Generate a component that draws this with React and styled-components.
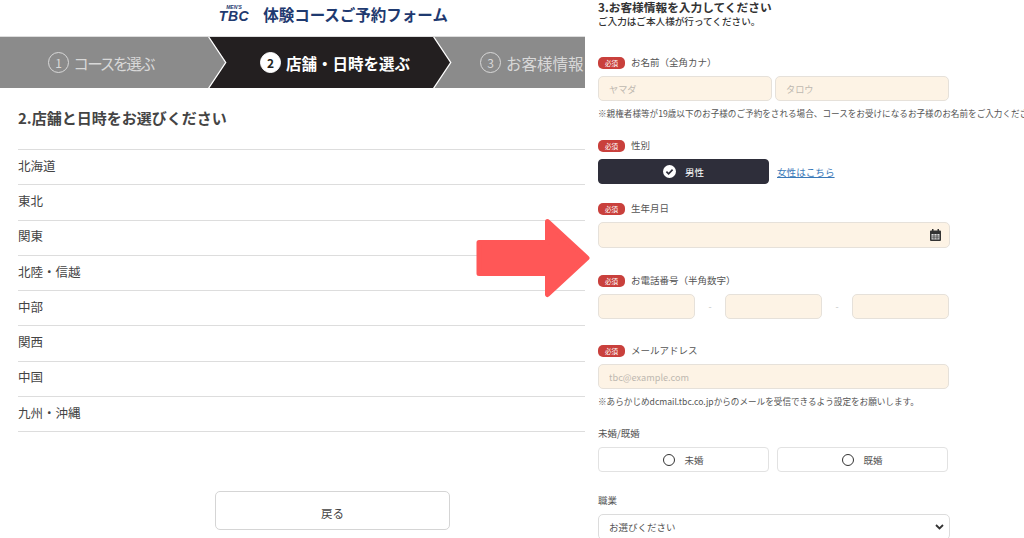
import styled, { createGlobalStyle } from 'styled-components';

const GlobalStyle = createGlobalStyle`
  html, body {
    margin: 0;
    padding: 0;
    background: #fff;
    overflow: hidden;
  }
  * {
    box-sizing: border-box;
  }
  body {
    font-family: "Noto Sans CJK JP", "Liberation Sans", sans-serif;
    color: #333;
  }
`;

const AREAS = ['北海道', '東北', '関東', '北陸・信越', '中部', '関西', '中国', '九州・沖縄'];

function FieldLabel({ required, children }) {
  return (
    <Label>
      {required && <Badge>必須</Badge>}
      <span>{children}</span>
    </Label>
  );
}

function CheckIcon() {
  return (
    <svg width="13" height="13" viewBox="0 0 13 13">
      <circle cx="6.5" cy="6.5" r="6.5" fill="#fff" />
      <path d="M3.4 6.7l2.2 2.2 4-4.2" fill="none" stroke="#2e2e3a" strokeWidth="1.7" />
    </svg>
  );
}

function CalendarIcon() {
  return (
    <svg width="11" height="12" viewBox="0 0 11 12">
      <path d="M2 0h1.5v1.5h4V0H9v1.5h1a1 1 0 0 1 1 1V11a1 1 0 0 1-1 1H1a1 1 0 0 1-1-1V2.5a1 1 0 0 1 1-1h1z" fill="#333" />
      <path d="M1.5 5h8v5.5h-8z" fill="#ddd" />
      <path d="M1.5 7h8M1.5 8.8h8M4 5v5.5M7 5v5.5" stroke="#333" strokeWidth=".7" />
    </svg>
  );
}

export default function App() {
  return (
    <Page>
      <GlobalStyle />
      <LeftPanel>
        <Header>
          <Logo>
            <LogoSmall>MEN'S</LogoSmall>
            <LogoMain>TBC</LogoMain>
          </Logo>
          <HeaderTitle>体験コースご予約フォーム</HeaderTitle>
        </Header>
        <Stepper>
          <Step $first>
            <StepNumber>1</StepNumber>
            <StepText $tight>コースを選ぶ</StepText>
          </Step>
          <Step $active>
            <StepNumber $active>2</StepNumber>
            <StepText>店舗・日時を選ぶ</StepText>
          </Step>
          <Step $last>
            <StepNumber>3</StepNumber>
            <StepText>お客様情報</StepText>
          </Step>
        </Stepper>
        <SectionTitle>2.店舗と日時をお選びください</SectionTitle>
        <AreaList>
          {AREAS.map(area => (
            <AreaItem key={area}>{area}</AreaItem>
          ))}
        </AreaList>
        <BackButton>戻る</BackButton>
      </LeftPanel>

      <RightPanel>
        <FormTitle>3.お客様情報を入力してください</FormTitle>
        <FormLead>ご入力はご本人様が行ってください。</FormLead>

        <Field $top={27}>
          <FieldLabel required>お名前（全角カナ）</FieldLabel>
          <Row $gap={3}>
            <TextInput $width={174} placeholder="ヤマダ" />
            <TextInput $width={174} placeholder="タロウ" />
          </Row>
          <Note>※親権者様等が19歳以下のお子様のご予約をされる場合、コースをお受けになるお子様のお名前をご入力ください。</Note>
        </Field>

        <Field $top={19}>
          <FieldLabel required>性別</FieldLabel>
          <Row $gap={8}>
            <ChoiceButton $selected><CheckIcon />男性</ChoiceButton>
            <TextLink href="#">女性はこちら</TextLink>
          </Row>
        </Field>

        <Field $top={17}>
          <FieldLabel required>生年月日</FieldLabel>
          <DateBox>
            <CalendarIcon />
          </DateBox>
        </Field>

        <Field $top={25}>
          <FieldLabel required>お電話番号（半角数字）</FieldLabel>
          <Row $gap={0}>
            <TextInput $width={97} />
            <Dash>-</Dash>
            <TextInput $width={97} />
            <Dash>-</Dash>
            <TextInput $width={97} />
          </Row>
        </Field>

        <Field $top={24}>
          <FieldLabel required>メールアドレス</FieldLabel>
          <TextInput $width={351} placeholder="tbc@example.com" />
          <Note>※あらかじめdcmail.tbc.co.jpからのメールを受信できるよう設定をお願いします。</Note>
        </Field>

        <Field $top={19}>
          <FieldLabel>未婚/既婚</FieldLabel>
          <Row $gap={8}>
            <ChoiceButton><RadioMark />未婚</ChoiceButton>
            <ChoiceButton><RadioMark />既婚</ChoiceButton>
          </Row>
        </Field>

        <Field $top={21}>
          <FieldLabel>職業</FieldLabel>
          <SelectBox>
            お選びください
            <svg width="9" height="6" viewBox="0 0 9 6">
              <path d="M1 1l3.5 3.5L8 1" fill="none" stroke="#333" strokeWidth="1.8" />
            </svg>
          </SelectBox>
        </Field>
      </RightPanel>

      <Arrow width="116" height="80" viewBox="0 0 116 80">
        <path
          d="M3 24.5h68.5V3.5L111 40 71.5 76.5V55.5H3z"
          fill="#ff5757"
          stroke="#ff5757"
          strokeWidth="5"
          strokeLinejoin="round"
        />
      </Arrow>
    </Page>
  );
}

const Page = styled.div`
  position: relative;
  display: flex;
  width: 1024px;
  height: 538px;
  overflow: hidden;
  background: #fff;
`;

const LeftPanel = styled.section`
  display: flex;
  flex-direction: column;
  width: 585px;
  flex-shrink: 0;
  overflow: hidden;
`;

const Header = styled.header`
  display: flex;
  align-items: center;
  justify-content: center;
  gap: 14px;
  height: 37px;
  padding: 0 0 8px 83px;
  border-bottom: 1px solid #ddd;
`;

const Logo = styled.div`
  display: flex;
  flex-direction: column;
  align-items: center;
  color: #1f3a70;
  font-family: "Liberation Sans", sans-serif;
  font-style: italic;
  font-weight: 700;
`;

const LogoSmall = styled.span`
  font-size: 5px;
  line-height: 5px;
`;

const LogoMain = styled.span`
  font-size: 14px;
  line-height: 13px;
  letter-spacing: 0.5px;
`;

const HeaderTitle = styled.h1`
  margin: 0;
  width: 186px;
  font-size: 15.5px;
  line-height: 20px;
  font-weight: 700;
  color: #1f3a70;
  white-space: nowrap;
`;

const Stepper = styled.nav`
  display: flex;
  height: 51px;
  flex-shrink: 0;
  background: #fff;
`;

const Step = styled.div`
  display: flex;
  align-items: center;
  gap: 5px;
  flex-shrink: 0;
  height: 100%;
  font-size: 15.5px;
  white-space: nowrap;
  font-weight: ${p => (p.$active ? 700 : 400)};
  color: ${p => (p.$active ? '#fff' : '#d8d8d8')};
  background: ${p => (p.$active ? '#231f20' : '#8b8b8b')};
  width: ${p => (p.$first ? '225px' : p.$active ? '242px' : '200px')};
  margin-left: ${p => (p.$first ? '0' : '-17px')};
  padding-left: ${p => (p.$first ? '48px' : p.$active ? '52px' : '47px')};
  clip-path: ${p =>
    p.$first
      ? 'polygon(0 0, calc(100% - 17px) 0, 100% 50%, calc(100% - 17px) 100%, 0 100%)'
      : p.$active
        ? 'polygon(1.5px 0, calc(100% - 17px) 0, 100% 50%, calc(100% - 17px) 100%, 1.5px 100%, 18.5px 50%)'
        : 'polygon(1.5px 0, 100% 0, 100% 100%, 1.5px 100%, 18.5px 50%)'};
`;

const StepText = styled.span`
  font-feature-settings: ${p => (p.$tight ? '"palt"' : 'normal')};
  letter-spacing: ${p => (p.$tight ? '-1.3px' : '0')};
`;

const StepNumber = styled.span`
  display: flex;
  align-items: center;
  justify-content: center;
  width: 21px;
  height: 21px;
  border-radius: 50%;
  font-size: 12px;
  font-weight: ${p => (p.$active ? 700 : 400)};
  color: ${p => (p.$active ? '#231f20' : '#d8d8d8')};
  background: ${p => (p.$active ? '#fff' : 'transparent')};
  border: 1px solid ${p => (p.$active ? '#fff' : '#d8d8d8')};
`;

const SectionTitle = styled.h2`
  margin: 20px 0 0 18px;
  font-size: 15px;
  line-height: 20px;
  font-weight: 700;
  color: #444;
`;

const AreaList = styled.ul`
  list-style: none;
  margin: 21px 0 0 18px;
  padding: 0;
  border-top: 1px solid #ddd;
`;

const AreaItem = styled.li`
  display: flex;
  align-items: center;
  height: 35.3px;
  padding-bottom: 4px;
  font-size: 12.5px;
  color: #444;
  border-bottom: 1px solid #ddd;
`;

const BackButton = styled.button`
  display: block;
  width: 235px;
  height: 39px;
  margin: 59px 0 0 215px;
  padding: 4px 0 0;
  background: #fff;
  border: 1px solid #d5d5d5;
  border-radius: 5px;
  font-family: inherit;
  font-size: 11.5px;
  color: #444;
`;

const RightPanel = styled.section`
  flex: 1;
  min-width: 0;
  padding-left: 13px;
  overflow: hidden;
`;

const FormTitle = styled.h2`
  margin: 0;
  font-size: 11.7px;
  line-height: 13px;
  font-weight: 700;
  color: #333;
  white-space: nowrap;
`;

const FormLead = styled.p`
  margin: 1px 0 0;
  font-size: 9.6px;
  line-height: 14px;
  font-weight: 500;
  color: #333;
  white-space: nowrap;
`;

const Field = styled.div`
  margin-top: ${p => p.$top}px;
`;

const Label = styled.div`
  display: flex;
  align-items: center;
  gap: 6px;
  height: 14px;
  margin-bottom: 7px;
  font-size: 9.5px;
  color: #555;
  white-space: nowrap;
`;

const Badge = styled.span`
  display: flex;
  align-items: center;
  justify-content: center;
  width: 27px;
  height: 12px;
  border-radius: 5px;
  margin-top: 2px;
  background: #c9403c;
  color: #fff;
  font-size: 6.5px;
`;

const Row = styled.div`
  display: flex;
  align-items: center;
  gap: ${p => p.$gap}px;
`;

const TextInput = styled.input`
  display: block;
  width: ${p => p.$width}px;
  height: 25px;
  padding: 0 10px;
  background: #fdf3e5;
  border: 1px solid #e6e1da;
  border-radius: 5px;
  font-family: inherit;
  font-size: 9.2px;
  outline: none;
  &::placeholder {
    color: #bdb8b0;
  }
`;

const Note = styled.p`
  margin: 6px 0 0;
  height: 12px;
  font-size: 8.6px;
  line-height: 12px;
  color: #555;
  white-space: nowrap;
`;

const ChoiceButton = styled.div`
  display: flex;
  align-items: center;
  justify-content: center;
  gap: 9px;
  width: 171px;
  height: 25px;
  border-radius: 4px;
  font-size: 9.5px;
  color: ${p => (p.$selected ? '#fff' : '#555')};
  background: ${p => (p.$selected ? '#2e2e3a' : '#fff')};
  border: 1px solid ${p => (p.$selected ? '#2e2e3a' : '#e2e2e2')};
`;

const RadioMark = styled.span`
  width: 12px;
  height: 12px;
  border-radius: 50%;
  border: 1.8px solid #333;
`;

const TextLink = styled.a`
  font-size: 9.6px;
  color: #3a79b8;
  text-decoration: underline;
`;

const DateBox = styled.div`
  display: flex;
  align-items: center;
  justify-content: flex-end;
  width: 352px;
  height: 26px;
  padding-right: 8px;
  background: #fdf3e5;
  border: 1px solid #e6e1da;
  border-radius: 5px;
`;

const Dash = styled.span`
  width: 30px;
  text-align: center;
  font-size: 9px;
  color: #c4c4c4;
`;

const SelectBox = styled.div`
  display: flex;
  align-items: center;
  justify-content: space-between;
  width: 352px;
  height: 26px;
  padding: 0 5px 0 10px;
  background: #fff;
  border: 1px solid #dcdcdc;
  border-radius: 5px;
  font-size: 9.5px;
  color: #555;
`;

const Arrow = styled.svg`
  position: absolute;
  left: 476px;
  top: 218px;
`;
